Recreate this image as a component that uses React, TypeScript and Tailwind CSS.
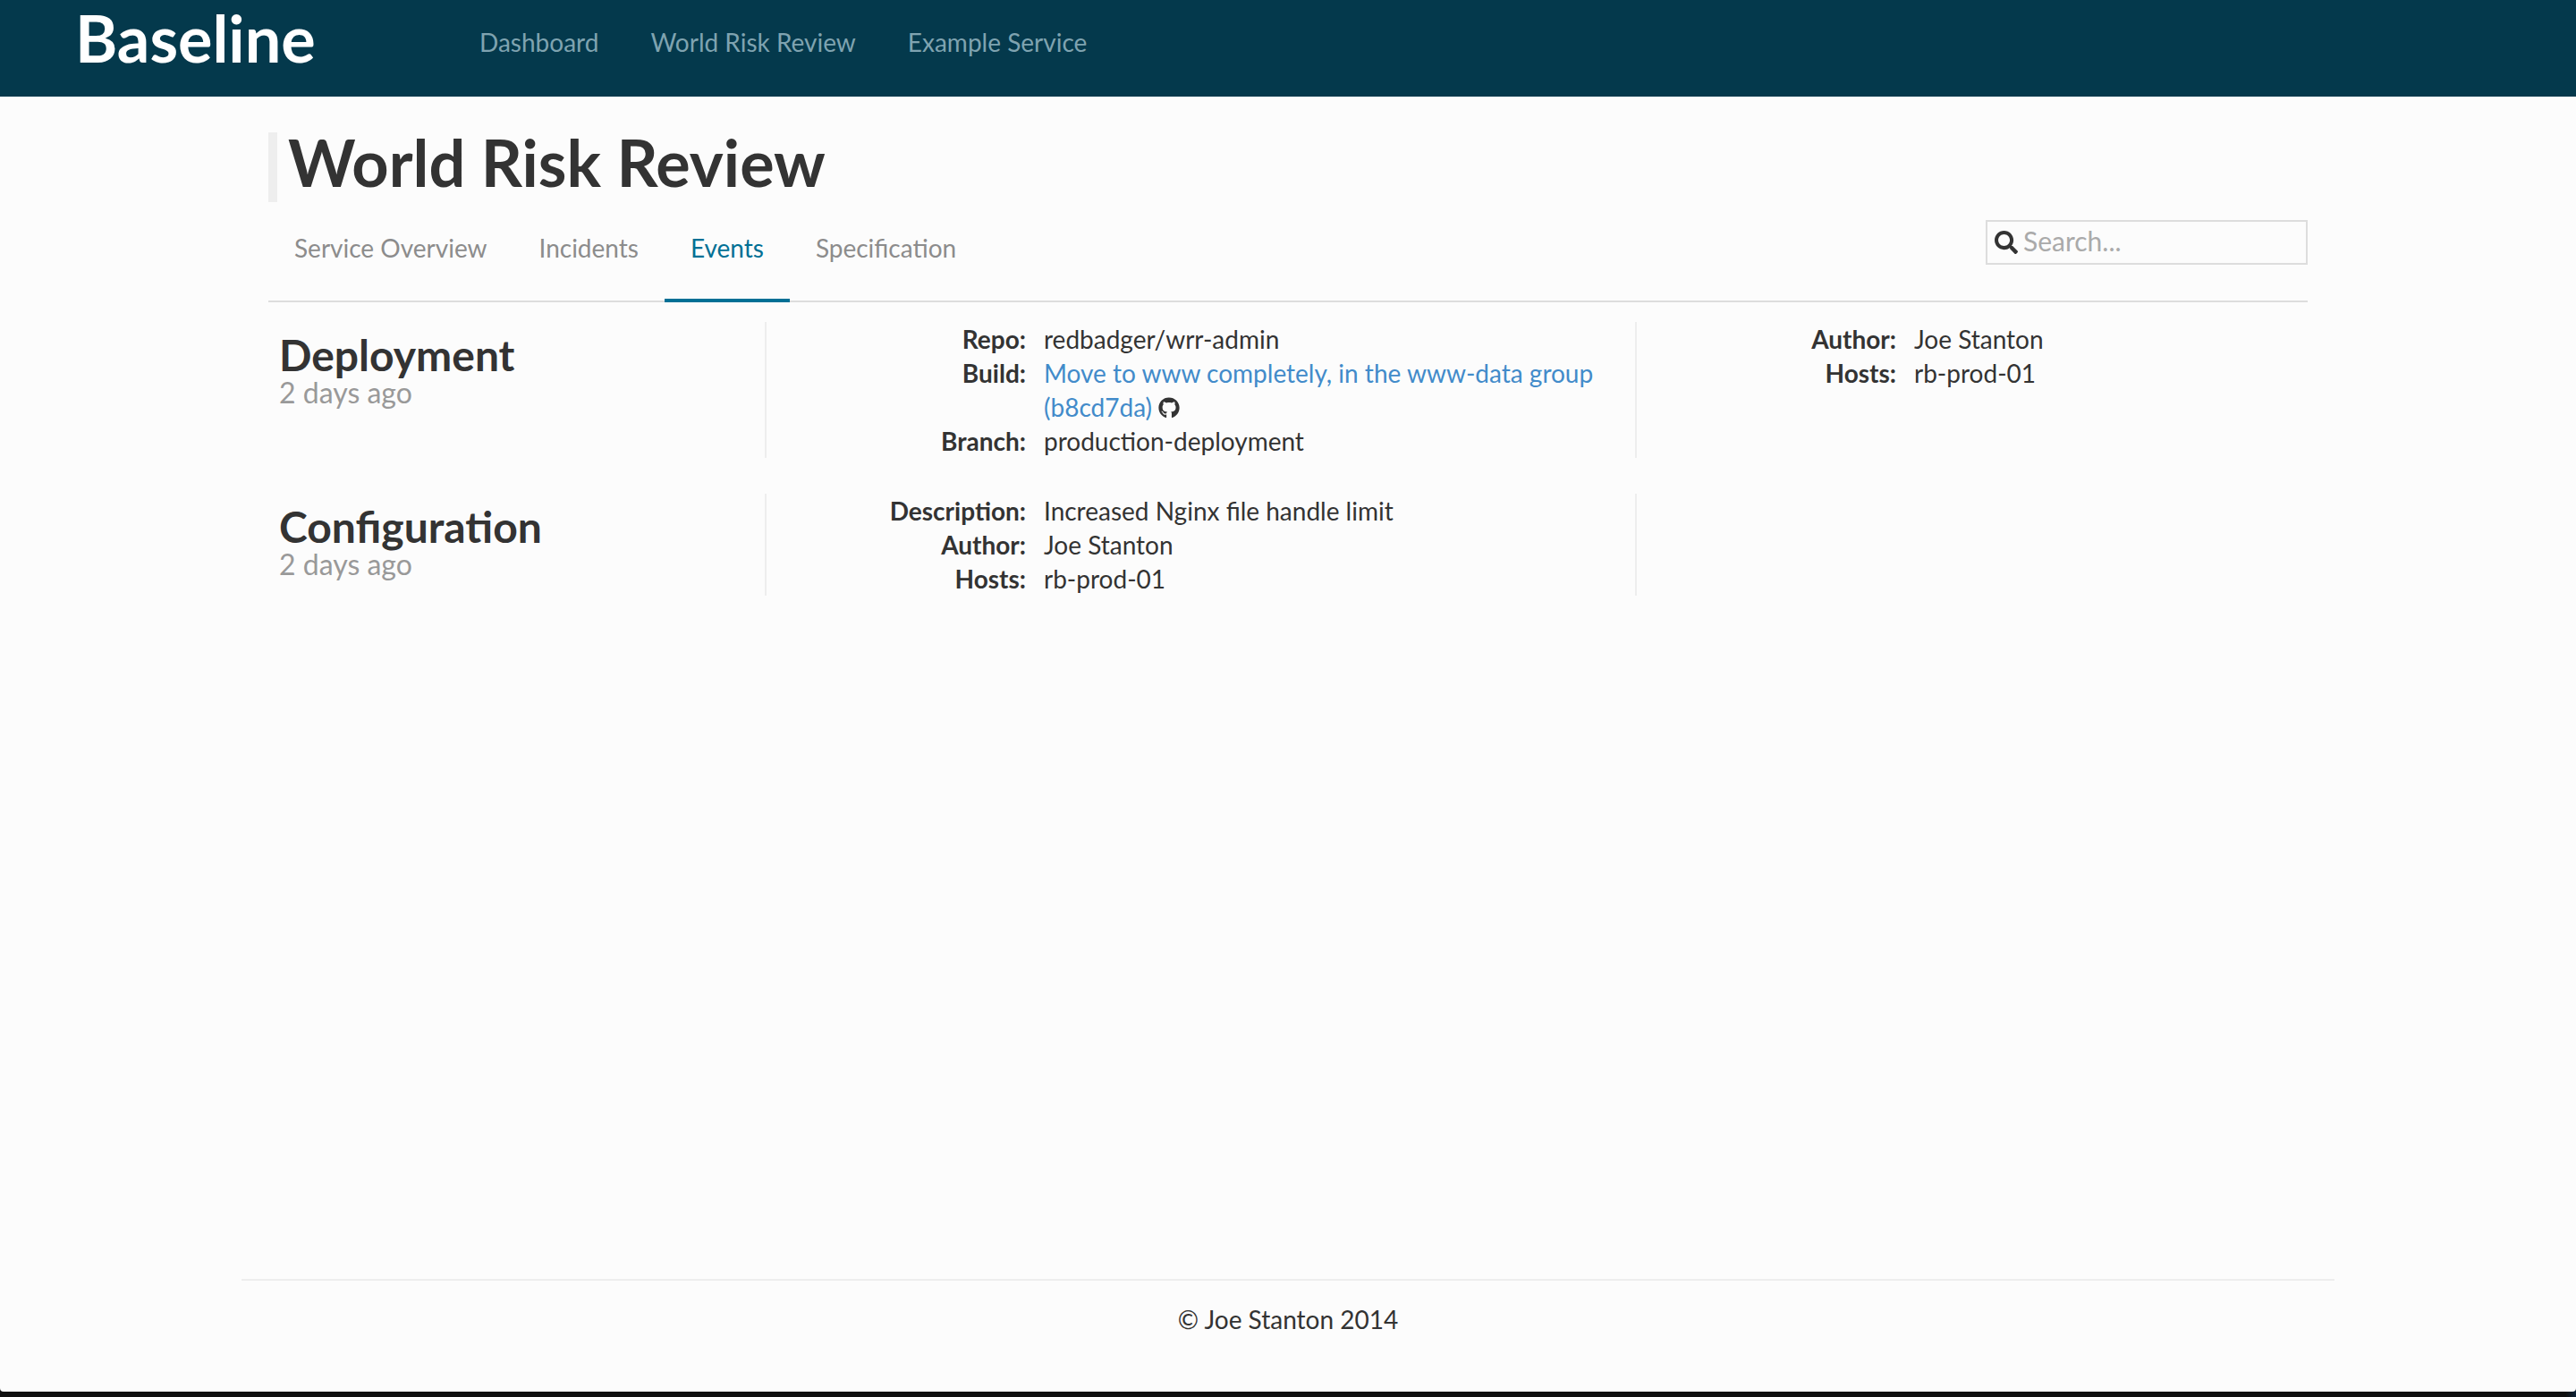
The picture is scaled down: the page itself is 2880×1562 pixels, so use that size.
import { FaGithub, FaSearch } from "react-icons/fa";
import type { ReactNode } from "react";

const navLinks = ["Dashboard", "World Risk Review", "Example Service"];
const tabs = ["Service Overview", "Incidents", "Events", "Specification"];

type Field = { label: string; value: ReactNode };

function Fields({ items }: { items: Field[] }) {
  return (
    <dl className="grid grid-cols-[262px_1fr] gap-x-5 px-7">
      {items.map((f) => (
        <div key={f.label} className="contents">
          <dt className="text-right font-bold">{f.label}:</dt>
          <dd>{f.value}</dd>
        </div>
      ))}
    </dl>
  );
}

function EventRow({ title, when, main, side }: { title: string; when: string; main: Field[]; side: Field[] }) {
  return (
    <article className="grid grid-cols-12">
      <header className="col-span-3 px-[42px] pt-3">
        <h2 className="text-[48px] leading-[50px] font-bold">{title}</h2>
        <p className="text-[32px] leading-[34px] text-[#999]">{when}</p>
      </header>
      <div className="col-span-5 border-x-2 border-[#eee]">
        <Fields items={main} />
      </div>
      <div className="col-span-4">
        <Fields items={side} />
      </div>
    </article>
  );
}

export default function App() {
  return (
    <div className="min-h-screen flex flex-col bg-linear-to-r from-[#0f0f0f] from-[99.6%] to-[#0c2238] pb-1.5 font-['Lato',sans-serif] text-[28px] leading-[38px] text-[#333]">
      <div className="flex-1 flex flex-col bg-[#fcfcfc] rounded-b-sm">
        <header className="flex h-[108px] items-start bg-[#04394c] pl-[84px]">
          <a href="#" className="w-[452px] pt-0.5 text-[72px] leading-[80px] font-bold text-white">Baseline</a>
          <nav className="flex gap-[58px] pt-7 text-[#7fa3b0]">
            {navLinks.map((l) => (
              <a key={l} href="#">{l}</a>
            ))}
          </nav>
        </header>

        <main className="flex-1 mx-auto w-full max-w-[2340px] pt-10">
          <div className="px-[30px]">
            <h1 className="border-l-[10px] border-[#eee] pb-3 pl-3 text-[72px] leading-[66px] font-bold">World Risk Review</h1>
            <div className="flex items-start justify-between border-b-2 border-[#ddd] pt-5">
              <nav className="flex -mb-0.5 text-[#8c8c8c]">
                {tabs.map((t) => (
                  <a
                    key={t}
                    href="#"
                    className={
                      t === "Events"
                        ? "px-[29px] pt-3 pb-[38px] border-b-4 border-[#007095] text-[#007095]"
                        : "px-[29px] pt-3 pb-[38px] border-b-4 border-transparent"
                    }
                  >
                    {t}
                  </a>
                ))}
              </nav>
              <label className="flex h-[50px] w-[360px] items-center gap-1.5 border-2 border-[#ddd] px-2">
                <FaSearch className="size-[26px] shrink-0" />
                <input
                  type="text"
                  aria-label="Search"
                  placeholder="Search..."
                  className="w-full min-w-0 bg-transparent pb-1 text-[30px] leading-[38px] outline-none placeholder:text-[#aaa]"
                />
              </label>
            </div>
          </div>

          <section className="flex flex-col gap-10 pt-[22px]">
            <EventRow
              title="Deployment"
              when="2 days ago"
              main={[
                { label: "Repo", value: "redbadger/wrr-admin" },
                {
                  label: "Build",
                  value: (
                    <>
                      <a href="#" className="text-[#428bca]">
                        Move to www completely, in the www-data group (b8cd7da)
                      </a>{" "}
                      <FaGithub className="inline size-6 align-[-2px]" />
                    </>
                  ),
                },
                { label: "Branch", value: "production-deployment" },
              ]}
              side={[
                { label: "Author", value: "Joe Stanton" },
                { label: "Hosts", value: "rb-prod-01" },
              ]}
            />
            <EventRow
              title="Configuration"
              when="2 days ago"
              main={[
                { label: "Description", value: "Increased Nginx file handle limit" },
                { label: "Author", value: "Joe Stanton" },
                { label: "Hosts", value: "rb-prod-01" },
              ]}
              side={[]}
            />
          </section>
        </main>

        <footer className="mx-auto w-full max-w-[2340px] border-t-2 border-[#eee] pt-6 pb-[62px] text-center">
          © Joe Stanton 2014
        </footer>
      </div>
    </div>
  );
}
